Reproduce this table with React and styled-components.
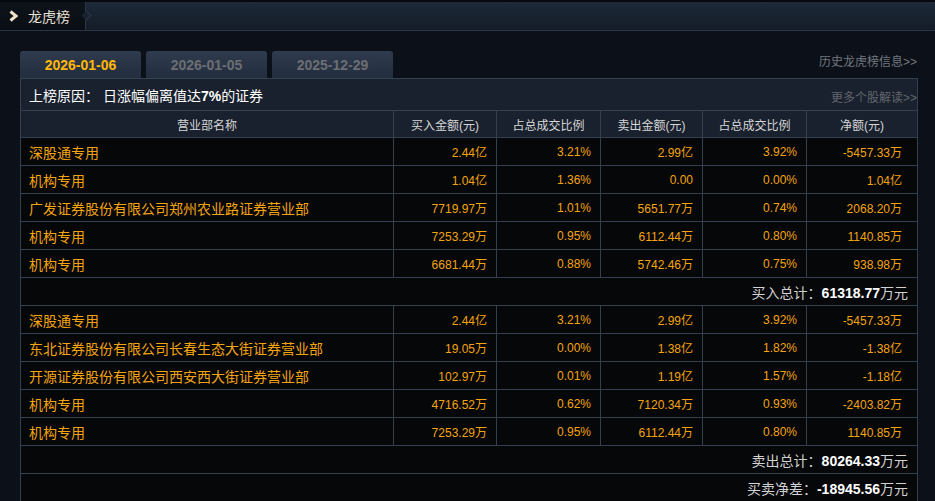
import styled, { createGlobalStyle } from "styled-components";

const GlobalStyle = createGlobalStyle`
  body {
    margin: 0;
    background-color: #0b1019;
    font-family: "Liberation Sans", "Noto Sans CJK SC", sans-serif;
  }
`;

const Page = styled.div`
  width: 935px;
  min-height: 501px;
  background-color: #0b1019;
`;

const TopBar = styled.div`
  height: 28px;
  border-top: 2px solid #05080c;
  border-bottom: 1px solid #2a3442;
  background: linear-gradient(#1d2939, #141c28);
  display: flex;
`;

const TitleTab = styled.div`
  position: relative;
  width: 86px;
  display: flex;
  align-items: center;
  gap: 9px;
  padding-left: 8px;
  box-sizing: border-box;
  background: linear-gradient(#0e131b, #0a0e14);
  border-right: 1px solid #2c3747;
  color: #e6e0d6;
  font-size: 14px;
  &::after {
    content: "";
    position: absolute;
    right: -5px;
    top: 10px;
    width: 6px;
    height: 6px;
    border-top: 1px solid #2c3747;
    border-right: 1px solid #2c3747;
    transform: rotate(45deg);
    background: #182231;
  }
`;

const Main = styled.div`
  padding: 20px 18px 0 20px;
`;

const TabsRow = styled.div`
  display: flex;
  align-items: flex-end;
  justify-content: space-between;
`;

const Tabs = styled.div`
  display: flex;
  gap: 5px;
`;

const Tab = styled.div`
  width: 121px;
  height: 27px;
  border-radius: 3px 3px 0 0;
  background: linear-gradient(#2f3b4e, #222d3e);
  display: flex;
  align-items: center;
  justify-content: center;
  font-size: 14px;
  font-weight: bold;
  color: ${(p) => (p.$active ? "#ffb808" : "#6c6e72")};
`;

const GrayLink = styled.span`
  color: ${(p) => p.$color || "#74787f"};
  font-size: 12px;
  padding-bottom: ${(p) => p.$pb || 0}px;
  padding-top: ${(p) => p.$pt || 0}px;
`;

const Table = styled.table`
  width: 897px;
  table-layout: fixed;
  border-collapse: collapse;
  border: 1px solid #34404f;
`;

const ReasonCell = styled.td`
  height: 31px;
  padding: 0 0 0 8px;
  background-color: #19212e;
  border-bottom: 1px solid #34404f;
`;

const ReasonInner = styled.div`
  display: flex;
  justify-content: space-between;
  align-items: center;
  color: #ffffff;
  font-size: 14px;
`;

const Strong = styled.b`
  font-weight: bold;
`;

const Th = styled.th`
  height: 26px;
  padding: 0;
  background-color: #19212e;
  border: 1px solid #34404f;
  color: #d6d6d6;
  font-size: 12px;
  font-weight: normal;
  text-align: center;
`;

const Td = styled.td`
  height: 27px;
  padding: 0 ${(p) => (p.$last ? 15 : 9)}px 0 8px;
  background-color: #050709;
  border: 1px solid #34404f;
  color: #f4a40e;
  font-size: ${(p) => (p.$name ? 14 : 12)}px;
  text-align: ${(p) => (p.$name ? "left" : "right")};
  white-space: nowrap;
`;

const SumCell = styled.td`
  height: 27px;
  padding: 0 9px 0 0;
  background-color: #050709;
  border: 1px solid #34404f;
  color: #d2d2d2;
  font-size: 14px;
  text-align: right;
`;

const SumValue = styled.b`
  color: #ffffff;
  font-weight: bold;
`;

const buyRows = [
  ["深股通专用", "2.44亿", "3.21%", "2.99亿", "3.92%", "-5457.33万"],
  ["机构专用", "1.04亿", "1.36%", "0.00", "0.00%", "1.04亿"],
  ["广发证券股份有限公司郑州农业路证券营业部", "7719.97万", "1.01%", "5651.77万", "0.74%", "2068.20万"],
  ["机构专用", "7253.29万", "0.95%", "6112.44万", "0.80%", "1140.85万"],
  ["机构专用", "6681.44万", "0.88%", "5742.46万", "0.75%", "938.98万"],
];

const sellRows = [
  ["深股通专用", "2.44亿", "3.21%", "2.99亿", "3.92%", "-5457.33万"],
  ["东北证券股份有限公司长春生态大街证券营业部", "19.05万", "0.00%", "1.38亿", "1.82%", "-1.38亿"],
  ["开源证券股份有限公司西安西大街证券营业部", "102.97万", "0.01%", "1.19亿", "1.57%", "-1.18亿"],
  ["机构专用", "4716.52万", "0.62%", "7120.34万", "0.93%", "-2403.82万"],
  ["机构专用", "7253.29万", "0.95%", "6112.44万", "0.80%", "1140.85万"],
];

const headers = ["营业部名称", "买入金额(元)", "占总成交比例", "卖出金额(元)", "占总成交比例", "净额(元)"];
const widths = [373, 103, 104, 102, 104, 111];

function Chevron() {
  return (
    <svg width="11" height="12" viewBox="0 0 11 12">
      <polyline points="2.5,1.5 8,6 2.5,10.5" fill="none" stroke="#f1e2c6" strokeWidth="3" />
    </svg>
  );
}

function DataRow({ row }) {
  return (
    <tr>
      {row.map((v, i) => (
        <Td key={i} $name={i === 0} $last={i === 5}>
          {v}
        </Td>
      ))}
    </tr>
  );
}

function SumRow({ label, value }) {
  return (
    <tr>
      <SumCell colSpan={6}>
        {label}：<SumValue>{value}</SumValue>万元
      </SumCell>
    </tr>
  );
}

export default function App() {
  return (
    <Page>
      <GlobalStyle />
      <TopBar>
        <TitleTab>
          <Chevron />
          龙虎榜
        </TitleTab>
      </TopBar>
      <Main>
        <TabsRow>
          <Tabs>
            <Tab $active>2026-01-06</Tab>
            <Tab>2026-01-05</Tab>
            <Tab>2025-12-29</Tab>
          </Tabs>
          <GrayLink $pb={9}>历史龙虎榜信息&gt;&gt;</GrayLink>
        </TabsRow>
        <Table>
          <colgroup>
            {widths.map((w, i) => (
              <col key={i} style={{ width: w }} />
            ))}
          </colgroup>
          <tbody>
            <tr>
              <ReasonCell colSpan={6}>
                <ReasonInner>
                  <span>
                    上榜原因： 日涨幅偏离值达<Strong>7%</Strong>的证券
                  </span>
                  <GrayLink $color="#62666d" $pt={3}>更多个股解读&gt;&gt;</GrayLink>
                </ReasonInner>
              </ReasonCell>
            </tr>
            <tr>
              {headers.map((h, i) => (
                <Th key={i}>{h}</Th>
              ))}
            </tr>
            {buyRows.map((r, i) => (
              <DataRow key={"b" + i} row={r} />
            ))}
            <SumRow label="买入总计" value="61318.77" />
            {sellRows.map((r, i) => (
              <DataRow key={"s" + i} row={r} />
            ))}
            <SumRow label="卖出总计" value="80264.33" />
            <SumRow label="买卖净差" value="-18945.56" />
          </tbody>
        </Table>
      </Main>
    </Page>
  );
}
